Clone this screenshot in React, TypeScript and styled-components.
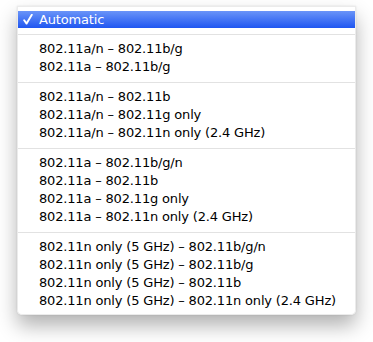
import { Fragment } from "react";
import styled, { createGlobalStyle } from "styled-components";

const GlobalStyle = createGlobalStyle`
  html, body {
    margin: 0;
    padding: 0;
    background: #ffffff;
  }

  body {
    font-family: "DejaVu Sans", "Liberation Sans", sans-serif;
    font-size: 13px;
    color: #000;
  }
`;

const Page = styled.div`
  width: 373px;
  height: 342px;
  padding: 6px 17px 0;
  box-sizing: border-box;
`;

const Menu = styled.ul`
  list-style: none;
  margin: 0;
  padding: 4px 0 4px;
  background: rgba(255, 255, 255, 0.97);
  border: 1px solid rgba(0, 0, 0, 0.08);
  border-radius: 0 0 5px 5px;
  box-shadow: 0 11px 20px rgba(0, 0, 0, 0.3), 0 0 2px rgba(0, 0, 0, 0.12);
`;

const Item = styled.li<{ $selected?: boolean }>`
  display: flex;
  align-items: center;
  height: ${(p) => (p.$selected ? "17px" : "18px")};
  padding-left: 5px;
  line-height: 18px;
  letter-spacing: -0.17px;
  white-space: nowrap;
  color: ${(p) => (p.$selected ? "#ffffff" : "#000000")};
  background: ${(p) =>
    p.$selected ? "linear-gradient(#6a94f8, #1f56f1)" : "transparent"};
`;

const Check = styled.span`
  width: 16px;
  flex: none;
  display: flex;
  align-items: center;
`;

const Separator = styled.li`
  height: 12px;
  display: flex;
  align-items: center;

  &::after {
    content: "";
    flex: 1;
    height: 1px;
    background: #e2e2e2;
  }
`;

const groups = [
  ["802.11a/n – 802.11b/g", "802.11a – 802.11b/g"],
  [
    "802.11a/n – 802.11b",
    "802.11a/n – 802.11g only",
    "802.11a/n – 802.11n only (2.4 GHz)",
  ],
  [
    "802.11a – 802.11b/g/n",
    "802.11a – 802.11b",
    "802.11a – 802.11g only",
    "802.11a – 802.11n only (2.4 GHz)",
  ],
  [
    "802.11n only (5 GHz) – 802.11b/g/n",
    "802.11n only (5 GHz) – 802.11b/g",
    "802.11n only (5 GHz) – 802.11b",
    "802.11n only (5 GHz) – 802.11n only (2.4 GHz)",
  ],
];

function CheckMark() {
  return (
    <svg width="10" height="11" viewBox="0 0 10 11">
      <path
        d="M1.2 6.2 L3.6 9.6 L8.8 0.8"
        fill="none"
        stroke="currentColor"
        strokeWidth="1.9"
        strokeLinecap="round"
        strokeLinejoin="round"
      />
    </svg>
  );
}

export default function App() {
  return (
    <>
      <GlobalStyle />
      <Page>
        <Menu>
          <Item $selected>
            <Check>
              <CheckMark />
            </Check>
            Automatic
          </Item>
          {groups.map((group, i) => (
            <Fragment key={i}>
              <Separator />
              {group.map((label) => (
                <Item key={label}>
                  <Check />
                  {label}
                </Item>
              ))}
            </Fragment>
          ))}
        </Menu>
      </Page>
    </>
  );
}
